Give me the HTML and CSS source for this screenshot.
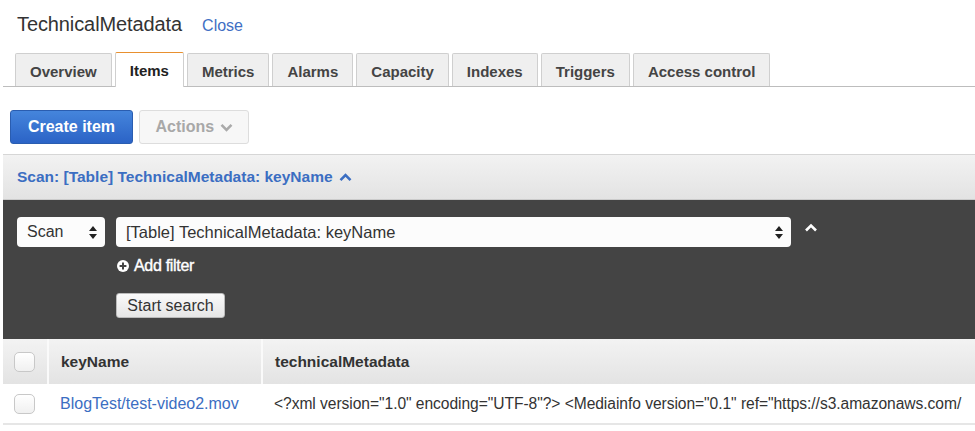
FILE: index.html
```html
<!DOCTYPE html>
<html lang="en">
<head>
    <meta charset="UTF-8">
    <title>TechnicalMetadata</title>
    <link rel="stylesheet" href="styles.css">
</head>
<body>
    <div class="page">
        <div class="title-bar">
            <h1>TechnicalMetadata</h1>
            <a href="#" class="close-link">Close</a>
        </div>

        <ul class="tabs">
            <li class="tab">Overview</li>
            <li class="tab active">Items</li>
            <li class="tab">Metrics</li>
            <li class="tab">Alarms</li>
            <li class="tab">Capacity</li>
            <li class="tab">Indexes</li>
            <li class="tab">Triggers</li>
            <li class="tab">Access control</li>
        </ul>

        <div class="toolbar">
            <button class="btn-primary">Create item</button>
            <button class="btn-disabled">Actions
                <svg class="chev-down" width="13" height="9" viewBox="0 0 13 9"><path d="M1.5 1.8 L6.5 6.8 L11.5 1.8" fill="none" stroke="#aaa" stroke-width="2.6"/></svg>
            </button>
        </div>

        <div class="scan-bar">
            <span>Scan: [Table] TechnicalMetadata: keyName</span>
            <svg width="13" height="9" viewBox="0 0 13 9"><path d="M1.5 7.2 L6.5 2.2 L11.5 7.2" fill="none" stroke="#3b6ec2" stroke-width="2.6"/></svg>
        </div>

        <div class="query-panel">
            <div class="query-row">
                <div class="select select-small">
                    <span>Scan</span>
                    <svg class="updown" width="8" height="13" viewBox="0 0 8 13"><path d="M4 0 L8 5 L0 5 Z M4 13 L8 8 L0 8 Z" fill="#222"/></svg>
                </div>
                <div class="query-main">
                    <div class="select select-large">
                        <span>[Table] TechnicalMetadata: keyName</span>
                        <svg class="updown" width="8" height="13" viewBox="0 0 8 13"><path d="M4 0 L8 5 L0 5 Z M4 13 L8 8 L0 8 Z" fill="#222"/></svg>
                    </div>
                    <div class="add-filter">
                        <svg width="12" height="12" viewBox="0 0 12 12"><circle cx="6" cy="6" r="6" fill="#fff"/><path d="M6 2.6 V9.4 M2.6 6 H9.4" stroke="#444" stroke-width="2"/></svg>
                        Add filter
                    </div>
                    <button class="btn-search">Start search</button>
                </div>
                <svg class="collapse" width="14" height="9" viewBox="0 0 14 9"><path d="M2 7.5 L7 2.5 L12 7.5" fill="none" stroke="#fff" stroke-width="2.6"/></svg>
            </div>
        </div>

        <table class="results">
            <thead>
                <tr>
                    <th class="col-check"><span class="checkbox"></span></th>
                    <th class="col-key">keyName</th>
                    <th>technicalMetadata</th>
                </tr>
            </thead>
            <tbody>
                <tr>
                    <td class="col-check"><span class="checkbox"></span></td>
                    <td class="col-key"><a href="#">BlogTest/test-video2.mov</a></td>
                    <td class="meta">&lt;?xml version="1.0" encoding="UTF-8"?&gt; &lt;Mediainfo version="0.1" ref="https://s3.amazonaws.com/</td>
                </tr>
            </tbody>
        </table>
    </div>
</body>
</html>
```

FILE: styles.css
```css
body {
    margin: 0;
    padding: 0;
    font-family: "Liberation Sans", Arial, sans-serif;
    color: #333;
    background: #fff;
    overflow: hidden;
}

.page {
    padding-left: 3px;
}

.title-bar {
    display: flex;
    align-items: baseline;
    gap: 20px;
    height: 41px;
    padding: 13px 0 0 14px;
    box-sizing: border-box;
}

.title-bar h1 {
    margin: 0;
    font-size: 20px;
    font-weight: normal;
    color: #333;
    letter-spacing: -0.1px;
}

.close-link {
    font-size: 16px;
    color: #3f6fc4;
    text-decoration: none;
}

/* tabs */
.tabs {
    display: flex;
    gap: 3px;
    list-style: none;
    margin: 12px 0 0 0;
    padding: 0 0 0 12px;
    border-bottom: 1px solid #bdbdbd;
    height: 33px;
}

.tab {
    padding: 0 14px;
    height: 33px;
    line-height: 36px;
    box-sizing: border-box;
    border: 1px solid #cfcfcf;
    border-bottom: none;
    border-radius: 2px 2px 0 0;
    background: #efefef;
    font-size: 15px;
    font-weight: bold;
    color: #444;
}

.tab.active {
    background: #fff;
    border-top: 1px solid #e8902f;
    height: 35px;
    margin-top: -1px;
    margin-bottom: -1px;
    color: #222;
}

/* buttons */
.toolbar {
    display: flex;
    gap: 6px;
    padding: 23px 0 10px 7px;
}

.btn-primary,
.btn-disabled,
.btn-search {
    font-family: inherit;
    cursor: pointer;
}

.btn-primary {
    height: 34px;
    width: 123px;
    padding: 0;
    border: 1px solid #2a5db0;
    border-radius: 3px;
    background: linear-gradient(#4585dc, #2b63c6);
    color: #fff;
    font-size: 16px;
    font-weight: bold;
}

.btn-disabled {
    height: 34px;
    width: 110px;
    padding: 0;
    border: 1px solid #ddd;
    border-radius: 3px;
    background: #f7f7f7;
    color: #a8a8a8;
    font-size: 16px;
    font-weight: bold;
}

.chev-down {
    margin-left: 1px;
    vertical-align: middle;
}

/* scan header */
.scan-bar {
    display: flex;
    align-items: center;
    gap: 6px;
    height: 46px;
    box-sizing: border-box;
    padding-left: 14px;
    border-top: 1px solid #d6d6d6;
    border-bottom: 1px solid #cbcbcb;
    background: linear-gradient(#f2f2f2, #e3e3e3);
    color: #3b6ec2;
    font-size: 15.5px;
    font-weight: bold;
}

/* query panel */
.query-panel {
    background: #444;
    height: 139px;
    padding: 17px 0 0 14px;
    box-sizing: border-box;
}

.query-row {
    display: flex;
    align-items: flex-start;
}

.select {
    display: flex;
    align-items: center;
    justify-content: space-between;
    height: 30px;
    box-sizing: border-box;
    background: #fcfcfc;
    border-radius: 4px;
    font-size: 16px;
    color: #333;
}

.select-small {
    width: 88px;
    padding: 0 8px 0 10px;
}

.select-large {
    width: 675px;
    padding: 0 8px 0 10px;
}

.select-large span {
    font-size: 16.5px;
}

.query-main {
    margin-left: 11px;
}

.add-filter {
    display: flex;
    align-items: center;
    gap: 5px;
    margin: 10px 0 0 1px;
    color: #fff;
    font-size: 16px;
    letter-spacing: -0.3px;
    -webkit-text-stroke: 0.4px #fff;
}

.btn-search {
    margin-top: 18px;
    height: 25px;
    width: 109px;
    padding: 0;
    border: 1px solid #bbb;
    border-radius: 3px;
    background: linear-gradient(#fafafa, #e6e6e6);
    color: #333;
    font-size: 16px;
}

.collapse {
    margin: 6px 0 0 13px;
}

/* results table */
.results {
    width: 100%;
    border-collapse: collapse;
    table-layout: fixed;
}

.results th,
.results td {
    box-sizing: border-box;
}

.results th {
    height: 45px;
    text-align: left;
    font-size: 15.5px;
    font-weight: bold;
    color: #333;
    background: linear-gradient(#f3f3f3, #e3e3e3);
    border-left: 2px solid #fafafa;
    padding: 0 0 0 12px;
}

.results th:first-child {
    border-left: none;
}

.results td {
    height: 40px;
    font-size: 16px;
    color: #333;
    padding: 0 0 0 12px;
    border-bottom: 2px solid #e6e6e6;
    white-space: nowrap;
    overflow: hidden;
}

.results td.meta {
    font-size: 15.6px;
    letter-spacing: -0.05px;
}

.results .col-check {
    width: 45px;
    padding-left: 11px;
}

.results .col-key {
    width: 214px;
}

.results a {
    color: #3b6ec2;
    text-decoration: none;
}

.checkbox {
    display: block;
    width: 21px;
    height: 20px;
    box-sizing: border-box;
    border: 1px solid #c8c8c8;
    border-radius: 5px;
    background: linear-gradient(#fff, #f0f0f0);
}
```
